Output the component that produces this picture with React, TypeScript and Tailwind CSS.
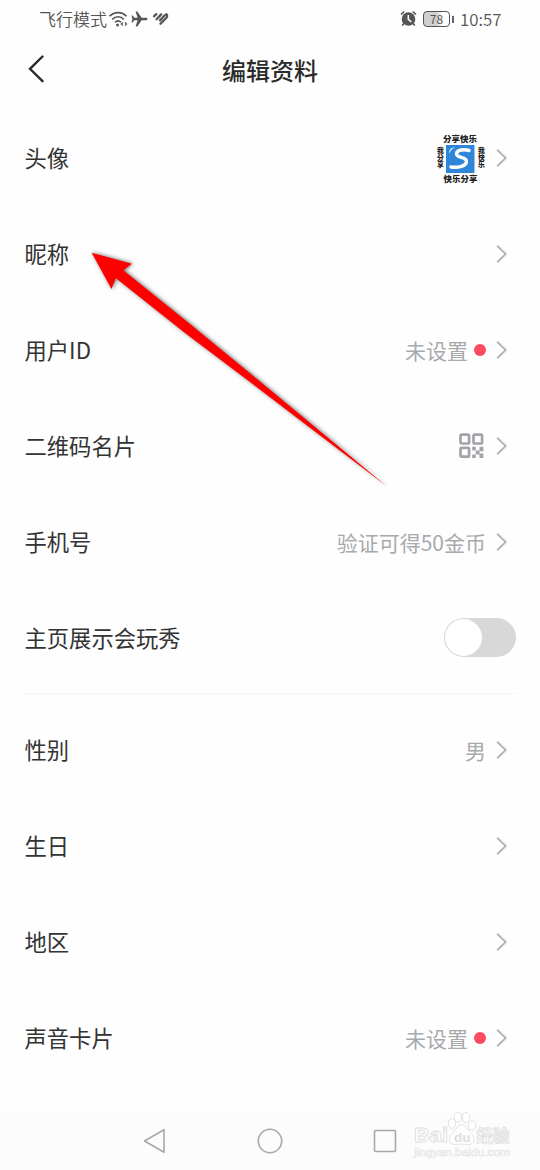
import type { ReactNode } from 'react';

function Chevron() {
  return (
    <svg className="w-[12px] h-[20px] shrink-0" viewBox="0 0 12 20" fill="none">
      <path d="M1.2 1.8 9.7 10l-8.5 8.2" stroke="#b4b4b6" strokeWidth="1.9" />
    </svg>
  );
}

function Avatar() {
  return (
    <svg
      className="w-[50px] h-[52px]"
      viewBox="0 0 50 52"
      fontFamily="'Noto Sans CJK SC', sans-serif"
      fontWeight="900"
      fill="#222"
    >
      <text x="7" y="10.2" fontSize="8.5">分享快乐</text>
      <text x="4.5" y="15.5" fontSize="6.8" className="[writing-mode:vertical-rl]">我分享</text>
      <text x="45.5" y="15.5" fontSize="6.8" className="[writing-mode:vertical-rl]">我快乐</text>
      <rect x="10" y="13" width="28.5" height="28" fill="#2f86d9" />
      <path d="M13 21.500c0-4 2-6 6-6-3 1-4 3-6 6z" fill="#d5ebff" />
      <path
        d="M33 18.500c-5-1.500-12-.8-12.500 3.200-.5 4.500 10.500 2.800 10 7.800-.4 4.500-8 6.500-15.500 5.500"
        fill="none"
        stroke="#fff"
        strokeWidth="3.4"
        strokeLinecap="round"
      />
      <text x="7.500" y="49.700" fontSize="8.500">快乐分享</text>
    </svg>
  );
}

function QrIcon() {
  return (
    <svg className="w-[25px] h-[26px] mr-[2px]" viewBox="0 0 25 26" fill="none">
      <g stroke="#a3a4a8" strokeWidth="2.7">
        <rect x="1.500" y="1.700" width="8.600" height="8.800" rx="1.200" />
        <rect x="14.500" y="1.700" width="8.600" height="8.800" rx="1.200" />
        <rect x="1.500" y="14.900" width="8.600" height="8.800" rx="1.200" />
      </g>
      <path
        d="M13.200 13.700h3.600v3.700h-3.600zM16.800 17.400h3.700v4h-3.700zM20.500 13.700h3.900v4.500h-3.900zM13.200 21.400h3.600v3.600h-3.600zM20.500 20.600h3.900v4.400h-3.900z"
        fill="#a3a4a8"
      />
    </svg>
  );
}

function Unset() {
  return (
    <>
      <span>未设置</span>
      <span className="ml-[6px] size-3 rounded-full bg-[#fc4b5c]" />
    </>
  );
}

function Toggle() {
  return (
    <div className="mb-[2px] w-[72px] h-[39px] rounded-full bg-[#d8d8d8] p-px">
      <div className="size-[37px] rounded-full bg-white" />
    </div>
  );
}

function Row({ label, children, chevron = true }: { label: string; children?: ReactNode; chevron?: boolean }) {
  return (
    <div className={`h-24 flex items-center justify-between pl-[24.5px] ${chevron ? 'pr-8' : 'pr-6'}`}>
      <span className="pb-[3px] text-[22.3px] leading-8 text-[#333]">{label}</span>
      <div className="flex items-center text-[21px] leading-[30px] text-[#a8a9ad]">
        {children}
        {chevron && (
          <span className="ml-[10px] flex">
            <Chevron />
          </span>
        )}
      </div>
    </div>
  );
}

function StatusBar() {
  return (
    <div className="h-[38px] flex items-center justify-between pl-[39px] pr-[38px] text-[17px] leading-6 text-[#555]">
      <div className="flex items-center">
        <span className="w-[67px] pb-px whitespace-nowrap font-[350]">飞行模式</span>
        {/* Wi-Fi */}
        <svg className="w-[20px] h-[18px] ml-[2px]" viewBox="0 0 20 18" fill="none" stroke="#555" strokeWidth="1.700">
          <path d="M1.500 6.200c5-4.900 12.500-4.900 17 0M4.200 9.300c3.500-3.400 8.300-3.400 11.600 0M7 12.200c1.800-1.700 4.200-1.700 6 0" />
          <circle cx="9.500" cy="15" r="1.500" fill="#555" stroke="none" />
          <path d="m14.800 12.500-1.500 1.500 1.500 1.500M17 12.500l1.500 1.500-1.500 1.500" strokeWidth="1.200" />
        </svg>
        {/* Airplane */}
        <svg className="w-[17px] h-[16px] ml-[3px]" viewBox="0 0 17 16" fill="#555">
          <path d="M16.500 8c0-.8-.7-1.300-1.700-1.300h-4.100L6.300.5H4.600l2 6.200H3.400L1.700 4.400H.5L1.400 8l-.9 3.600h1.200l1.700-2.300h3.200l-2 6.200h1.700l4.400-6.200h4.100c1 0 1.700-.5 1.700-1.300z" />
        </svg>
        {/* Health */}
        <svg className="w-[17px] h-[15px] mb-[2px] ml-[4px]" viewBox="0 0 17 15" fill="none" stroke="#555" strokeWidth="2.300" strokeLinecap="round">
          <path d="M2 5.300 4.300 3.100M4.600 8.200 9.200 3.400M8.500 12.800l5.700-5.800c1.300-1.400 1.200-3 .1-3.700M8 9.400l4.800-5.200" />
        </svg>
      </div>
      <div className="flex items-center">
        {/* Alarm */}
        <svg className="w-[17px] h-[17px] mb-[2px]" viewBox="0 0 17 17" fill="none" stroke="#555" strokeWidth="1.700">
          <circle cx="8.500" cy="9" r="6.800" fill="#555" stroke="none" />
          <path d="M1 4.500 4.200 1.500M16 4.500l-3.200-3M3.800 13.500 2.300 15.500M13.200 13.500l1.500 2" />
          <path d="M8.300 5v4.300l3 2.500" stroke="#fff" strokeWidth="1.500" />
        </svg>
        <div className="ml-[6px] w-[27px] h-[16px] rounded-[4px] border-[1.5px] border-[#555] bg-[linear-gradient(90deg,#d0d0d0_50%,#fff_72%)] text-center text-[12px] leading-[13px]">
          78
        </div>
        <div className="ml-[2px] h-[7px] w-[2px] bg-[#666]" />
        <span className="ml-[6px] w-[42px] pb-px text-[16.8px] whitespace-nowrap font-[350]">10:57</span>
      </div>
    </div>
  );
}

function NavBar() {
  return (
    <div className="relative h-[58px] bg-[#fcfcfc]">
      <div className="h-full flex items-center justify-between px-[143px]">
        <svg className="w-[23px] h-[26px]" viewBox="0 0 23 26" fill="none" stroke="#a8a8a8" strokeWidth="1.600" strokeLinejoin="round">
          <path d="M1.500 13 21 1.700v22.600z" />
        </svg>
        <svg className="w-[26px] h-[26px] ml-[1px]" viewBox="0 0 26 26" fill="none" stroke="#a8a8a8" strokeWidth="1.600">
          <circle cx="13" cy="13" r="11.700" />
        </svg>
        <svg className="w-[24px] h-[24px]" viewBox="0 0 24 24" fill="none" stroke="#a8a8a8" strokeWidth="1.600">
          <rect x="1.500" y="1.500" width="21" height="21" rx="1" />
        </svg>
      </div>
      <Watermark />
    </div>
  );
}

function Watermark() {
  return (
    <svg
      className="absolute left-[408px] top-[-4px] w-[110px] h-[54px]"
      viewBox="0 0 110 54"
      fill="#fff"
      stroke="#dfdfdf"
      strokeWidth="0.900"
      fontFamily="'Liberation Sans', 'Noto Sans CJK SC', sans-serif"
      fontWeight="700"
    >
      <text x="6" y="34" fontSize="21" textLength="34" lengthAdjust="spacingAndGlyphs">Bai</text>
      <ellipse cx="44" cy="15.500" rx="3.600" ry="4.800" />
      <ellipse cx="50" cy="9" rx="3.700" ry="5" />
      <ellipse cx="58" cy="9.500" rx="3.700" ry="5" />
      <ellipse cx="64" cy="17.500" rx="3.700" ry="4.500" />
      <path d="M53.500 17c-4 0-5.500 5-8.500 7.500-6 5-4 12.500 2 12 4-.5 9-.5 13 0 6.500.5 8-7 2.500-12-3-2.500-4.500-7.500-9-7.500z" />
      <text x="46" y="33.500" fontSize="13.500" fill="#ddd" stroke="none">du</text>
      <text x="68.500" y="34" fontSize="16.500" textLength="33" lengthAdjust="spacingAndGlyphs">经验</text>
      <text x="6" y="48" fontSize="10" fontWeight="400" textLength="96" lengthAdjust="spacingAndGlyphs" stroke="#e6e6e6" strokeWidth="0.600">jingyan.baidu.com</text>
    </svg>
  );
}

// Red pointer lying over the list, aimed at the nickname row
function Pointer() {
  return (
    <svg
      className="pointer-events-none absolute left-[80px] top-[240px] w-[320px] h-[260px] drop-shadow-[1px_0px_2px_rgba(0,0,0,0.6)]"
      viewBox="0 0 320 260"
    >
      <path d="M11.700 12.700 52 23.700 43.300 30.300 110 84 170 133.300 307 246.500 170 142 105 93 35.700 38 31.500 49z" fill="#fe0000" />
    </svg>
  );
}

export default function App() {
  return (
    <div className="relative w-[540px] h-[1170px] overflow-hidden bg-[#fefefe] flex flex-col font-['Noto_Sans_CJK_SC',sans-serif]">
      <StatusBar />
      <header className="h-[64px] grid grid-cols-3 items-center px-6 pb-[2px]">
        <svg className="w-[20px] h-[28px] ml-[3px]" viewBox="0 0 20 28" fill="none">
          <path d="M15.500 1.500 3 13.800l12.500 12.400" stroke="#2b2b2b" strokeWidth="2.400" strokeLinecap="round" />
        </svg>
        <h1 className="pt-px text-center text-[24px] leading-8 font-medium text-[#2b2b2b]">编辑资料</h1>
      </header>

      <main className="flex-1 pt-2">
        <Row label="头像">
          <Avatar />
        </Row>
        <Row label="昵称" />
        <Row label="用户ID">
          <Unset />
        </Row>
        <Row label="二维码名片">
          <QrIcon />
        </Row>
        <Row label="手机号">验证可得50金币</Row>
        <Row label="主页展示会玩秀" chevron={false}>
          <Toggle />
        </Row>
        <hr className="mx-6 mt-[7px] mb-2 border-[#f4f4f4]" />
        <Row label="性别">男</Row>
        <Row label="生日" />
        <Row label="地区" />
        <Row label="声音卡片">
          <Unset />
        </Row>
      </main>

      <NavBar />
      <Pointer />
    </div>
  );
}
